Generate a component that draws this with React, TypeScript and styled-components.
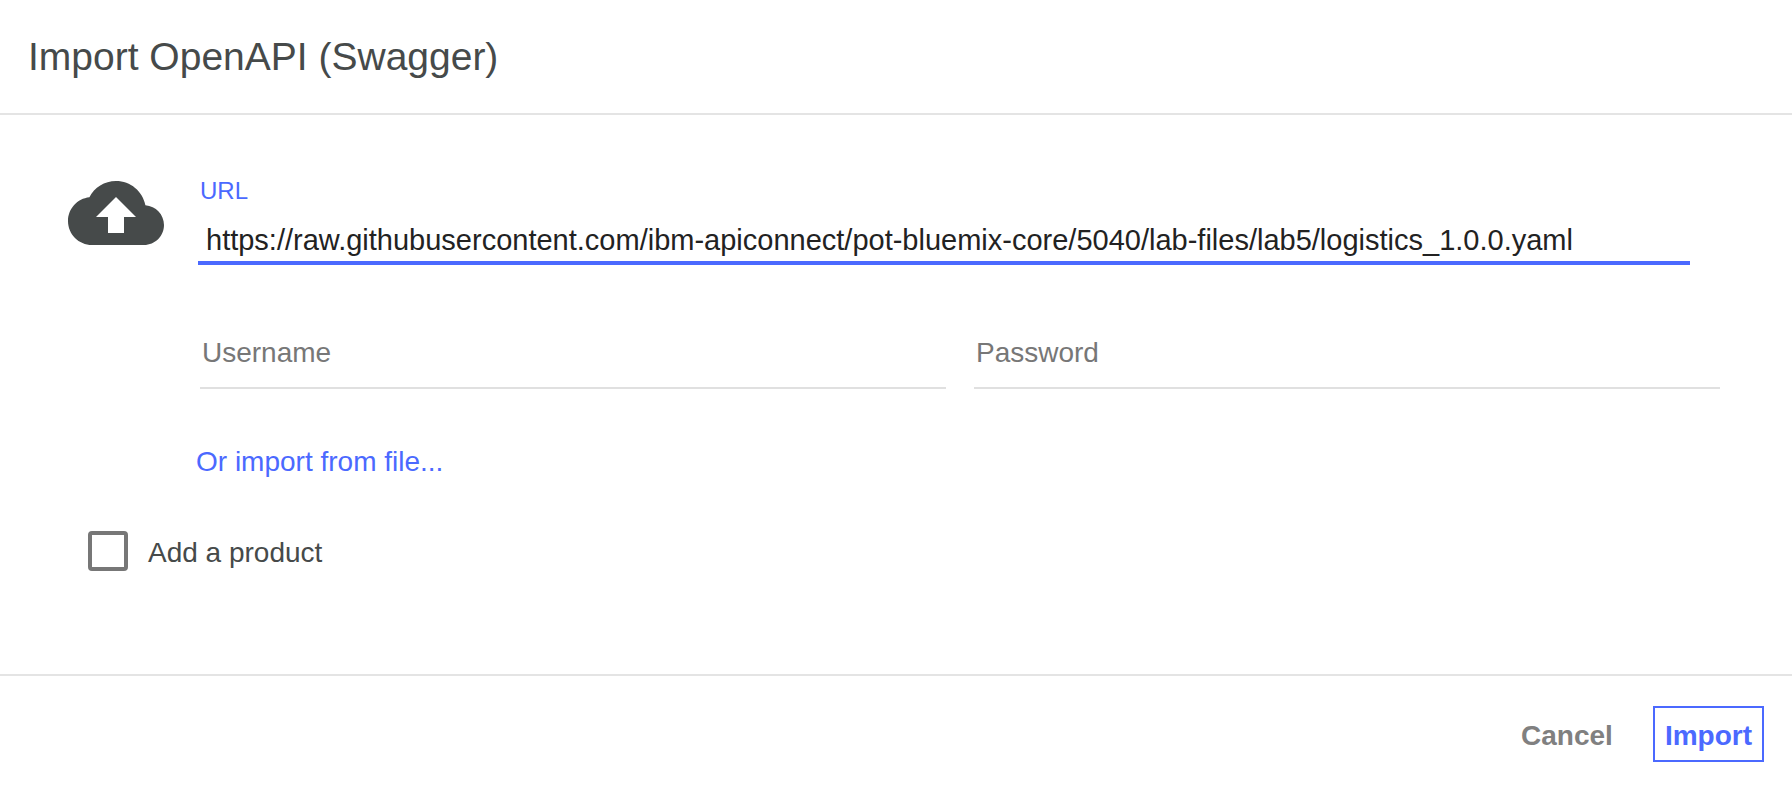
import React, { useState } from "react";
import styled, { createGlobalStyle } from "styled-components";

const color = {
  text: "#464a4a",
  input: "#222222",
  muted: "#777777",
  accent: "#4b69ff",
  rule: "#e4e4e4",
  field: "#e0e0e0",
};

const GlobalStyle = createGlobalStyle`
  *, *::before, *::after { box-sizing: border-box; }
  body {
    margin: 0;
    background: #ffffff;
  }
  body, input, button {
    font-family: "Liberation Sans", Arial, sans-serif;
    font-size: 28px;
    line-height: 32px;
  }
`;

const Dialog = styled.form`
  display: flex;
  flex-direction: column;
  min-height: 100vh;
  color: ${color.text};
`;

const Header = styled.header`
  padding: 33px 28px 32px;
  border-bottom: 2px solid ${color.rule};
`;

const Title = styled.h1`
  margin: 0;
  font-size: 39px;
  line-height: 48px;
  font-weight: 400;
`;

const Body = styled.main`
  flex: 1;
  padding: 50px 72px 50px 68px;
`;

const Source = styled.section`
  display: flex;
  align-items: flex-start;
  gap: 32px;
`;

const CloudIcon = styled.svg`
  flex: none;
  width: 96px;
  height: 96px;
  fill: ${color.text};
`;

const Fields = styled.div`
  flex: 1;
  min-width: 0;
  padding-top: 12px;
`;

const UrlField = styled.div`
  display: flex;
  flex-direction: column;
  margin: 0 30px 0 2px;
`;

const UrlLabel = styled.label`
  padding-left: 2px;
  font-size: 24px;
  line-height: 28px;
  color: ${color.accent};
`;

const TextInput = styled.input`
  width: 100%;
  border: 0;
  border-radius: 0;
  outline: 0;
  background: transparent;
  color: ${color.input};
  &::placeholder {
    color: ${color.muted};
    opacity: 1;
  }
`;

const UrlInput = styled(TextInput)`
  height: 60px;
  padding: 19px 8px 5px;
  border-bottom: 4px solid ${color.accent};
  font-size: 29px;
`;

const Credentials = styled.div`
  display: grid;
  grid-template-columns: 1fr 1fr;
  gap: 28px;
  margin: 64px 0 0 4px;
`;

const CredentialInput = styled(TextInput)`
  height: 60px;
  padding: 7px 2px 17px;
  border-bottom: 2px solid ${color.field};
`;

const FileLink = styled.a`
  display: inline-block;
  margin-top: 57px;
  color: ${color.accent};
  text-decoration: none;
`;

const ProductOption = styled.label`
  display: inline-flex;
  align-items: center;
  gap: 20px;
  margin: 53px 0 0 20px;
`;

const OptionText = styled.span`
  padding-top: 4px;
`;

const Checkbox = styled.input`
  appearance: none;
  width: 40px;
  height: 40px;
  margin: 0;
  border: 4px solid ${color.muted};
  border-radius: 4px;
  &:checked {
    background: ${color.accent};
    border-color: ${color.accent};
  }
`;

const Footer = styled.footer`
  display: flex;
  justify-content: flex-end;
  gap: 28px;
  padding: 30px 28px;
  border-top: 2px solid ${color.rule};
`;

const Button = styled.button<{ $primary?: boolean }>`
  height: 56px;
  padding: 3px 10px 0;
  border: 2px solid ${(p) => (p.$primary ? color.accent : "transparent")};
  background: transparent;
  color: ${(p) => (p.$primary ? color.accent : "#808080")};
  font-weight: 700;
  cursor: pointer;
`;

export default function App() {
  const [url, setUrl] = useState(
    "https://raw.githubusercontent.com/ibm-apiconnect/pot-bluemix-core/5040/lab-files/lab5/logistics_1.0.0.yaml"
  );

  return (
    <>
      <GlobalStyle />
      <Dialog onSubmit={(e) => e.preventDefault()}>
        <Header>
          <Title>Import OpenAPI (Swagger)</Title>
        </Header>
        <Body>
          <Source>
            <CloudIcon viewBox="0 0 24 24" aria-hidden="true">
              <path d="M19.35 10.04C18.67 6.59 15.64 4 12 4 9.11 4 6.6 5.64 5.35 8.04 2.34 8.36 0 10.91 0 14c0 3.31 2.69 6 6 6h13c2.76 0 5-2.24 5-5 0-2.64-2.05-4.78-4.65-4.96zM14 13v4h-4v-4H7l5-5 5 5h-3z" />
            </CloudIcon>
            <Fields>
              <UrlField>
                <UrlLabel htmlFor="url">URL</UrlLabel>
                <UrlInput
                  id="url"
                  type="text"
                  spellCheck={false}
                  value={url}
                  onChange={(e) => setUrl(e.target.value)}
                />
              </UrlField>
              <Credentials>
                <CredentialInput type="text" placeholder="Username" aria-label="Username" />
                <CredentialInput type="password" placeholder="Password" aria-label="Password" />
              </Credentials>
              <FileLink href="#file">Or import from file...</FileLink>
            </Fields>
          </Source>
          <ProductOption>
            <Checkbox type="checkbox" />
            <OptionText>Add a product</OptionText>
          </ProductOption>
        </Body>
        <Footer>
          <Button type="button">Cancel</Button>
          <Button type="submit" $primary>
            Import
          </Button>
        </Footer>
      </Dialog>
    </>
  );
}
